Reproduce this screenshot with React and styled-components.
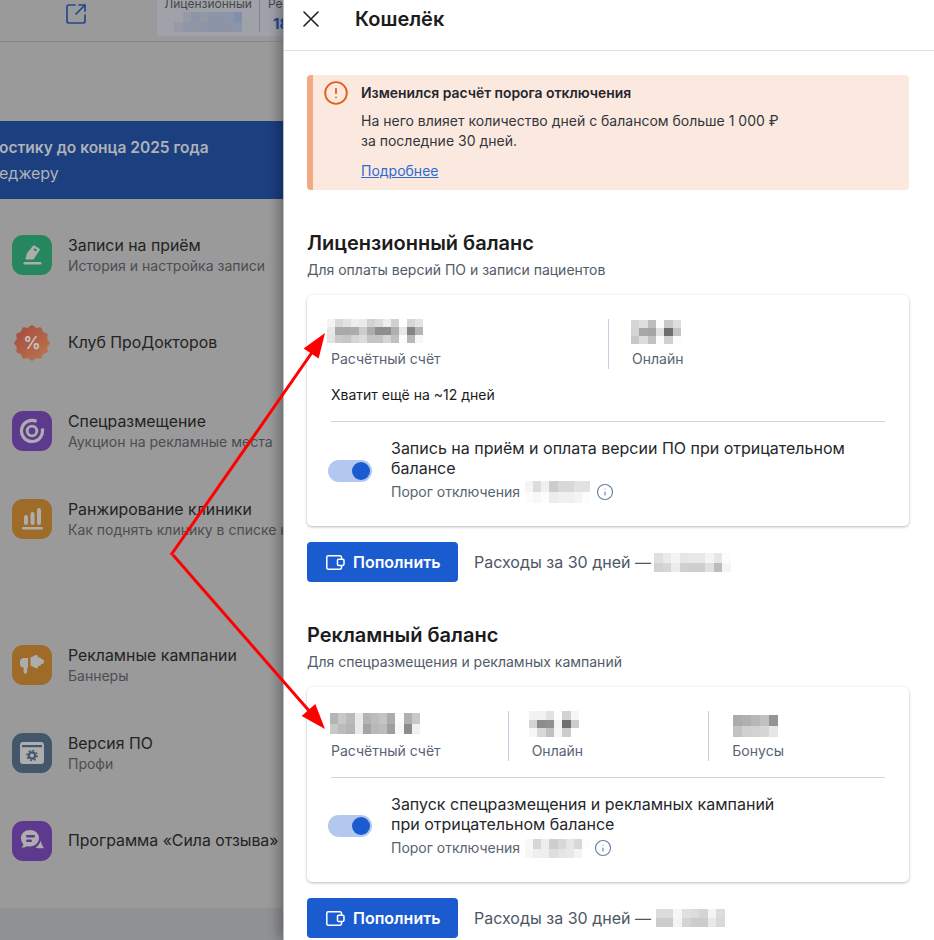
import React from 'react';
import styled, { createGlobalStyle } from 'styled-components';
import { SquareArrowOutUpRight, CircleAlert, Info } from 'lucide-react';

const Global = createGlobalStyle`
  html, body { margin: 0; padding: 0; background: #fff; }
  body { font-family: Inter, "Noto Sans", sans-serif; -webkit-font-smoothing: antialiased; }
  * { box-sizing: border-box; }
`;

const Screen = styled.div`
  position: relative; width: 934px; height: 940px; overflow: hidden; display: flex;
`;
const Page = styled.div`
  flex: 0 0 283px; height: 940px; overflow: hidden; background: #9a9a9a;
  display: flex; flex-direction: column;
`;
const TopBar = styled.div`
  flex: 0 0 42px; display: flex; align-items: flex-start; padding-left: 64px;
  border-bottom: 1px solid #888; color: #24488f;
  svg { margin-top: 2px; flex: none; }
`;
const BalanceBox = styled.div`
  margin-left: 69px; height: 36px; width: 126px; flex: none; background: #9fa2a9; display: flex;
  svg { margin-top: 0; }
`;
const BalanceCell = styled.div`
  flex: 0 0 103px; height: 32px; border-right: 1px solid #7f858f; display: flex; flex-direction: column; align-items: center;
`;
const BalanceLabel = styled.div`
  font-size: 12px; line-height: 16px; margin-top: -4px; color: #47484a; white-space: nowrap;
`;
const BalanceCellRest = styled.div`
  padding-left: 8px; overflow: hidden;
`;
const BalanceNumber = styled.div`
  font-size: 15px; font-weight: 700; line-height: 20px; margin: 2px 0 0 5px; color: #1f4a90;
`;
const Banner = styled.div`
  flex: 0 0 78px; margin-top: 79px; background: #1c3f80; padding: 16px 0 0 0; overflow: hidden; color: #b0b3b8;
`;
const BannerTitle = styled.div`
  font-size: 15.5px; font-weight: 600; line-height: 22px; margin-left: -1px; white-space: nowrap;
`;
const BannerSub = styled.div`
  font-size: 16px; line-height: 20px; margin: 4px 0 0 -1px; white-space: nowrap;
`;
const Menu = styled.div`
  display: flex; flex-direction: column; gap: 48px; padding: 36px 0 0 12px;
`;
const MenuRow = styled.div`
  display: flex; align-items: center; gap: 16px; height: 40px; white-space: nowrap;
  margin-top: ${p => (p.$gap ? '58px' : '0')};
`;
const MenuIcon = styled.div`
  width: 40px; height: 40px; border-radius: 11px; flex: none; background: ${p => p.$bg};
  display: flex; align-items: center; justify-content: center;
`;
const MenuTitle = styled.div`
  font-size: 15.85px; line-height: 20px; color: #232323; margin-bottom: 1px;
`;
const MenuSub = styled.div`
  font-size: 14px; line-height: 18px; color: #4a4d52;
`;
const FootBar = styled.div`
  margin-top: auto; flex: 0 0 32px; background: #909193;
`;

const Panel = styled.div`
  position: relative; flex: 0 0 651px; height: 940px; background: #fff; overflow: hidden;
  box-shadow: -5px 0 10px rgba(0,0,0,.28); border-left: 1px solid #b9bec4;
`;
const PanelHead = styled.div`
  height: 51px; display: flex; align-items: center; gap: 36px; padding: 0 0 12px 19px; border-bottom: 1px solid #e0e0e0;
`;
const PanelTitle = styled.div`
  font-size: 20px; font-weight: 600; color: #1c1c1c; line-height: 24px;
`;
const PanelBody = styled.div`
  padding: 24px 25px 0 23px;
`;
const Alert = styled.div`
  height: 115px; background: #fbe9e0; border-left: 6px solid #f2aa85; border-radius: 4px;
  display: flex; gap: 12px; padding: 5px 0 0 10px;
  svg { flex: none; }
`;
const AlertTitle = styled.div`
  font-size: 13.9px; font-weight: 600; line-height: 20px; color: #25272b; margin-top: 3px;
`;
const AlertText = styled.div`
  font-size: 14px; line-height: 20px; color: #33363b; margin-top: 8px;
`;
const AlertLink = styled.a`
  display: block; font-size: 14px; line-height: 20px; color: #2e6bd3; text-decoration: underline; margin-top: 10px;
`;
const SectionTitle = styled.div`
  font-size: 20px; font-weight: 600; line-height: 24px; color: #1c1c1c; margin-top: 41px;
`;
const SectionSub = styled.div`
  font-size: 14px; line-height: 18px; color: #525b69; margin-top: 6px; margin-bottom: 16px;
`;
const Card = styled.div`
  border-radius: 5px; background: #fff; box-shadow: 0 1px 3px rgba(0,0,0,.28); padding-top: 24px; padding-bottom: ${p => p.$pb}px;
`;
const Stats = styled.div`
  display: grid; grid-template-columns: repeat(${p => p.$cols}, 1fr);
`;
const Stat = styled.div`
  height: 50px; padding-left: ${p => (p.$first ? '24px' : '23px')};
  border-left: ${p => (p.$first ? 'none' : '1px solid #c3d0e0')};
`;
const StatValue = styled.div`
  height: 30px; margin-left: ${p => p.$dx}px; padding-top: ${p => p.$dy}px;
`;
const StatLabel = styled.div`
  font-size: 14px; line-height: 20px; color: #596373;
`;
const Enough = styled.div`
  margin: 16px 0 0 24px; font-size: 14px; line-height: 20px; color: #1c1c1c;
`;
const Rule = styled.div`
  height: 1px; background: #ced5dd; margin: 16px 24px 0 24px;
`;
const SwitchRow = styled.div`
  display: flex; align-items: center; gap: 19px; margin: 16px 24px 0 21px;
`;
const Track = styled.div`
  width: 44px; height: 22px; border-radius: 11px; background: #b2c8ee; flex: none; display: flex; align-items: center; justify-content: flex-end; padding-right: 2px;
`;
const Thumb = styled.div`
  width: 18px; height: 18px; border-radius: 50%; background: #1a5cd0;
`;
const SwitchText = styled.div`
  font-size: 16px; line-height: 20px; color: #25272b; width: 490px;
`;
const Threshold = styled.div`
  font-size: 14px; line-height: 20px; color: #596373; margin-top: ${p => p.$top}px; display: flex; align-items: center;
  svg:first-of-type { margin-left: -3px; }
  svg:last-child { margin-left: ${p => p.$gap}px; }
`;
const Actions = styled.div`
  display: flex; align-items: center; gap: 16px; margin-top: 16px;
`;
const TopUp = styled.button`
  width: 151px; height: 40px; border: 0; border-radius: 4px; background: #1a5cd0; color: #fff;
  font: 600 16px/20px Inter, sans-serif; display: flex; align-items: center; gap: 8px; padding: 0 0 0 19px;
`;
const Spend = styled.div`
  font-size: 16px; line-height: 20px; color: #4c5666; display: flex; align-items: center; gap: ${p => p.$gap}px;
`;
const Arrows = styled.svg`
  position: absolute; left: 0; top: 0; pointer-events: none;
`;
const MosaicSvg = styled.svg`
  display: block; flex: none;
`;

const Mosaic = ({ rows, w, h }) => {
  const data = rows.map(r => r.split(','));
  const n = data[0].length;
  return (
    <MosaicSvg width={w} height={h} viewBox={`0 0 ${n} ${data.length}`} preserveAspectRatio="none" shapeRendering="crispEdges">
      {data.map((r, y) => r.map((c, x) => (
        <rect key={x} x={x} y={y} width="1" height="1" fill={c.length === 6 ? `#${c}` : `#${c}${c}${c}`} />
      )))}
    </MosaicSvg>
  );
};

const Wallet = () => (
  <svg width="19" height="15" viewBox="0 0 19 15" fill="none" stroke="#fff" strokeWidth="1.5" strokeLinejoin="round">
    <path d="M15.5 4V2.2A1.4 1.4 0 0 0 14.1.8H2.2A1.4 1.4 0 0 0 .8 2.2v10.6a1.4 1.4 0 0 0 1.4 1.4h11.9a1.4 1.4 0 0 0 1.4-1.4V11" />
    <path d="M12.5 4.2h4.2a1.3 1.3 0 0 1 1.3 1.3v3.6a1.3 1.3 0 0 1-1.3 1.3h-4.2a1 1 0 0 1-1-1V5.2a1 1 0 0 1 1-1Z" fill="#1a5cd0" />
  </svg>
);

const Close = () => (
  <svg width="16" height="16" viewBox="0 0 16 16" stroke="#222" strokeWidth="1.6" strokeLinecap="round">
    <path d="M1 1l14 14M15 1L1 15" />
  </svg>
);

const fg = '#adadad';
const IconPen = () => (
  <svg width="26" height="26" viewBox="0 0 26 26" fill={fg}>
    <path d="M15.5 3.5l5 3.2a1 1 0 0 1 .3 1.4l-6.3 9.3H7.4a.8.8 0 0 1-.8-1l1.4-5.2 6-7.4a1 1 0 0 1 1.5-.3Z" />
    <rect x="4.5" y="20" width="18" height="2.6" rx="1.3" />
    <path d="M15.6 6.2l2.4 1.6-1.1 1.6-2.4-1.6z" fill="#26875f" />
  </svg>
);
const scallop = (() => {
  const pts = [];
  for (let i = 0; i < 144; i++) {
    const a = (i / 144) * Math.PI * 2;
    const r = 16.8 + 1 * Math.cos(a * 12);
    pts.push(`${(18 + r * Math.cos(a)).toFixed(2)},${(18 + r * Math.sin(a)).toFixed(2)}`);
  }
  return pts.join(' ');
})();
const IconBadge = () => (
  <svg width="36" height="36" viewBox="0 0 36 36">
    <defs>
      <linearGradient id="bdg" x1="0" y1="0" x2="1" y2="1">
        <stop offset="0" stopColor="#a6473f" />
        <stop offset="1" stopColor="#ba7a4f" />
      </linearGradient>
    </defs>
    <polygon points={scallop} fill="url(#bdg)" />
    <text x="18" y="24" textAnchor="middle" fontFamily="Inter" fontWeight="600" fontSize="17" fill="#c8c8c8">%</text>
  </svg>
);
const IconTarget = () => (
  <svg width="26" height="26" viewBox="0 0 26 26" fill="none" stroke={fg} strokeWidth="3.2">
    <path d="M23.2 10.5A10.5 10.5 0 1 1 17.5 3.5" />
    <circle cx="13" cy="13" r="4.8" strokeWidth="2.8" />
  </svg>
);
const IconBars = () => (
  <svg width="26" height="26" viewBox="0 0 26 26" fill={fg}>
    <rect x="5" y="9" width="4" height="10" rx="2" />
    <rect x="11.5" y="6" width="4" height="13" rx="2" />
    <rect x="18" y="2" width="4" height="17" rx="2" />
    <rect x="3" y="21" width="21" height="2.6" rx="1.3" />
  </svg>
);
const IconHorn = () => (
  <svg width="28" height="26" viewBox="0 0 28 26" fill={fg}>
    <path d="M2 9.5C2 7 4 6 6 6h4v9.5H9.2V20a1.8 1.8 0 0 1-3.6 0v-4.5C3.4 15.5 2 14 2 12Z" />
    <path d="M12.5 5.5 18 3c1-.4 2 .3 2 1.3v1.2h1.5c1 0 1.5.6 1.5 1.5h1c1 0 2 1 2 2.5s-1 2.5-2 2.5h-1c0 1.2-.7 2-1.8 2H20v1c0 1-1 1.7-2 1.3l-5.5-2.8Z" />
  </svg>
);
const IconVersion = () => (
  <svg width="26" height="26" viewBox="0 0 26 26">
    <rect x="1" y="2" width="24" height="22" rx="3" fill={fg} />
    <rect x="3" y="5" width="20" height="2.2" fill="#44566a" />
    <circle cx="13" cy="15.5" r="3.2" fill="none" stroke="#44566a" strokeWidth="2.2" />
    <circle cx="13" cy="15.5" r="5" fill="none" stroke="#44566a" strokeWidth="1.5" strokeDasharray="1.8 2.1" />
  </svg>
);
const IconChat = () => (
  <svg width="28" height="28" viewBox="0 0 28 28" fill={fg}>
    <path d="M12 3c5 0 9 3.5 9 8s-4 8.5-9 8.5c-1 0-2 0-3-.3-1.500 1-3.500 1.500-5.500 1.300 1-1 1.600-2 1.900-3.300C3.700 15.500 3 13.500 3 11c0-4.500 4-8 9-8Z" />
    <rect x="8" y="8" width="9" height="2.4" rx="1.2" fill="#5e3a8f" />
    <rect x="8" y="12.5" width="6" height="2.4" rx="1.2" fill="#5e3a8f" />
    <path d="M22.500 13.500c1 3 2 5.500 3.500 7.500-2 .5-5 .5-8.500-.5 2.500-1.500 4.500-4 5-7Z" />
  </svg>
);

const App = () => (
  <Screen>
    <Global />
    <Page>
      <TopBar>
        <SquareArrowOutUpRight size={24} strokeWidth={1.7} />
        <BalanceBox>
          <BalanceCell>
            <BalanceLabel>Лицензионный</BalanceLabel>
            <Mosaic w={68} h={20} rows={['9fa2a9,969aa4,8c95a8,9498a4,8d94a3,8c95a8,8a94ac,7f8fae', '969aa6,8f97a6,8f97a7,8c94a6,8b94a7,8b94a7,8c94a5,8c95a8']} />
          </BalanceCell>
          <BalanceCellRest>
            <BalanceLabel>Рекламный</BalanceLabel>
            <BalanceNumber>18</BalanceNumber>
          </BalanceCellRest>
        </BalanceBox>
      </TopBar>
      <Banner>
        <BannerTitle>остику до конца 2025 года</BannerTitle>
        <BannerSub>еджеру</BannerSub>
      </Banner>
      <Menu>
        <MenuRow>
          <MenuIcon $bg="#26875f"><IconPen /></MenuIcon>
          <div><MenuTitle>Записи на приём</MenuTitle><MenuSub>История и настройка записи</MenuSub></div>
        </MenuRow>
        <MenuRow>
          <MenuIcon $bg="transparent"><IconBadge /></MenuIcon>
          <div><MenuTitle>Клуб ПроДокторов</MenuTitle></div>
        </MenuRow>
        <MenuRow>
          <MenuIcon $bg="#5e3a8f"><IconTarget /></MenuIcon>
          <div><MenuTitle>Спецразмещение</MenuTitle><MenuSub>Аукцион на рекламные места</MenuSub></div>
        </MenuRow>
        <MenuRow>
          <MenuIcon $bg="#9e6c28"><IconBars /></MenuIcon>
          <div><MenuTitle>Ранжирование клиники</MenuTitle><MenuSub>Как поднять клинику в списке на</MenuSub></div>
        </MenuRow>
        <MenuRow $gap>
          <MenuIcon $bg="#9e6c28"><IconHorn /></MenuIcon>
          <div><MenuTitle>Рекламные кампании</MenuTitle><MenuSub>Баннеры</MenuSub></div>
        </MenuRow>
        <MenuRow>
          <MenuIcon $bg="#44566a"><IconVersion /></MenuIcon>
          <div><MenuTitle>Версия ПО</MenuTitle><MenuSub>Профи</MenuSub></div>
        </MenuRow>
        <MenuRow>
          <MenuIcon $bg="#5e3a8f"><IconChat /></MenuIcon>
          <div><MenuTitle>Программа «Сила отзыва»</MenuTitle></div>
        </MenuRow>
      </Menu>
      <FootBar />
    </Page>
    <Panel>
      <PanelHead>
        <Close />
        <PanelTitle>Кошелёк</PanelTitle>
      </PanelHead>
      <PanelBody>
        <Alert>
          <CircleAlert size={26} color="#e85d14" strokeWidth={1.7} />
          <div>
            <AlertTitle>Изменился расчёт порога отключения</AlertTitle>
            <AlertText>На него влияет количество дней с балансом больше 1 000 ₽<br />за последние 30 дней.</AlertText>
            <AlertLink>Подробнее</AlertLink>
          </div>
        </Alert>

        <SectionTitle>Лицензионный баланс</SectionTitle>
        <SectionSub>Для оплаты версий ПО и записи пациентов</SectionSub>
        <Card $pb={23}>
          <Stats $cols={2}>
            <Stat $first>
              <StatValue $dx={-4} $dy={0}>
                <Mosaic w={96} h={24} rows={['f4,d8,e2,ee,ea,d2,dc,ee,d0,ff,d6,e4', 'e8,aa,aa,ac,cc,ac,8e,8e,b0,e6,84,b4', 'e4,ca,c6,d4,dc,c4,c4,d6,c0,fc,b8,f8']} />
              </StatValue>
              <StatLabel>Расчётный счёт</StatLabel>
            </Stat>
            <Stat>
              <StatValue $dx={-1} $dy={1}>
                <Mosaic w={50} h={24} rows={['d6,de,bc,fc,c8,de', 'd4,a6,a4,e0,6e,c4', 'c8,dc,c0,fc,d0,fc']} />
              </StatValue>
              <StatLabel>Онлайн</StatLabel>
            </Stat>
          </Stats>
          <Enough>Хватит ещё на ~12 дней</Enough>
          <Rule />
          <SwitchRow>
            <Track><Thumb /></Track>
            <div>
              <SwitchText>Запись на приём и оплата версии ПО при отрицательном балансе</SwitchText>
              <Threshold $top={3} $gap={6}>Порог отключения ·
                <Mosaic w={65} h={22} rows={['f4,dc,f0,cc,d8,d8,e2,e2', 'fc,f8,fc,ec,f0,f0,f4,fc']} />
                <Info size={18} color="#5c7fa6" strokeWidth={1.5} />
              </Threshold>
            </div>
          </SwitchRow>
        </Card>
        <Actions>
          <TopUp><Wallet />Пополнить</TopUp>
          <Spend $gap={3}>Расходы за 30 дней —
            <Mosaic w={77} h={19} rows={['e0,ea,f4,e6,e8,e8,f4,e6,fc', 'd2,d6,ec,d0,ce,ce,e0,bc,f4']} />
          </Spend>
        </Actions>

        <SectionTitle>Рекламный баланс</SectionTitle>
        <SectionSub>Для спецразмещения и рекламных кампаний</SectionSub>
        <Card $pb={24}>
          <Stats $cols={3}>
            <Stat $first>
              <StatValue $dx={-1} $dy={2}>
                <Mosaic w={90} h={21} rows={['b4,c8,ba,ea,b4,bc,c4,ac,fa,b0,c8', 'c8,bc,b4,ea,a4,b8,bc,9e,f8,8c,f0']} />
              </StatValue>
              <StatLabel>Расчётный счёт</StatLabel>
            </Stat>
            <Stat>
              <StatValue $dx={-3} $dy={0}>
                <Mosaic w={50} h={26} rows={['f2,f2,e2,fe,d2,f6', 'd4,8c,90,f4,70,cc', 'f6,d8,c0,f6,cc,ff']} />
              </StatValue>
              <StatLabel>Онлайн</StatLabel>
            </Stat>
            <Stat>
              <StatValue $dx={1} $dy={4}>
                <Mosaic w={45} h={22} rows={['ac,b0,b8,c0,94', 'c2,d0,d2,d6,e6']} />
              </StatValue>
              <StatLabel>Бонусы</StatLabel>
            </Stat>
          </Stats>
          <Rule />
          <SwitchRow>
            <Track><Thumb /></Track>
            <div>
              <SwitchText>Запуск спецразмещения и рекламных кампаний<br />при отрицательном балансе</SwitchText>
              <Threshold $top={4} $gap={4}>Порог отключения ·
                <Mosaic w={65} h={19} rows={['f8,d6,ee,ce,d8,e6,d8,fc', 'f6,ee,ee,de,e4,e8,f4,fe']} />
                <Info size={18} color="#5c7fa6" strokeWidth={1.5} />
              </Threshold>
            </div>
          </SwitchRow>
        </Card>
        <Actions>
          <TopUp><Wallet />Пополнить</TopUp>
          <Spend $gap={5}>Расходы за 30 дней —
            <Mosaic w={69} h={18} rows={['dc,dc,f6,e0,dc,d4,f4,dc', 'cc,cc,f4,d4,cc,cc,e8,d8']} />
          </Spend>
        </Actions>
      </PanelBody>
    </Panel>
    <Arrows width="934" height="940" viewBox="0 0 934 940">
      <path d="M171 555 L313 351" stroke="#f00" strokeWidth="3" fill="none" />
      <polygon points="325,333 318.6,358.6 303.6,348.4" fill="#f00" />
      <path d="M173 555 L311 713" stroke="#f00" strokeWidth="3" fill="none" />
      <polygon points="325,729 315.3,704 301.7,716" fill="#f00" />
    </Arrows>
  </Screen>
);

export default App;
